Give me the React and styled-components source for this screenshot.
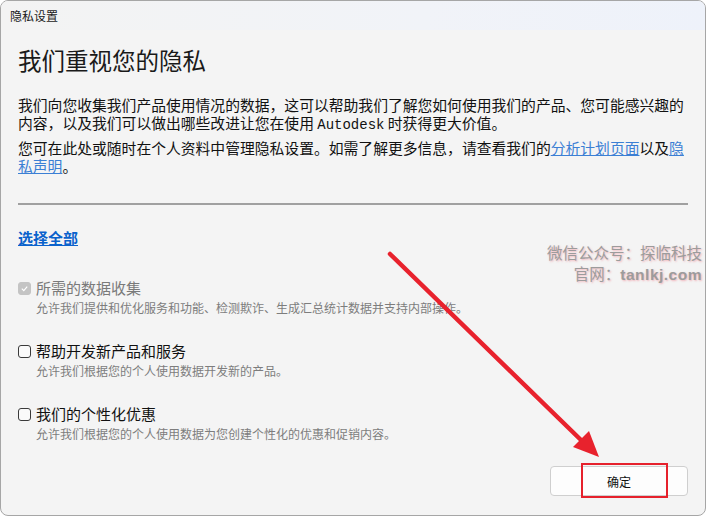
import React from 'react'
import styled, { createGlobalStyle } from 'styled-components'

const GlobalStyle = createGlobalStyle`
    html, body {
        margin: 0;
        padding: 0;
        background: #ffffff;
    }
    body {
        font-family: "Noto Sans CJK SC", "Noto Sans", sans-serif;
    }
`

const Window = styled.div`
    position: relative;
    width: 706px;
    height: 516px;
    box-sizing: border-box;
    border: 1px solid #a6a6a6;
    border-radius: 8px;
    overflow: hidden;
    background: #f4f4f4;
    display: flex;
    flex-direction: column;
`

const TitleBar = styled.div`
    height: 29px;
    display: flex;
    align-items: center;
    padding-left: 9px;
    font-size: 12px;
    color: #1a1a1a;
    background: linear-gradient(90deg, #f3f3f3 0%, #f1f3f8 60%, #eef2fa 100%);
`

const Content = styled.div`
    flex: 1;
    display: flex;
    flex-direction: column;
    padding: 0 17px 0 17px;
`

const Heading = styled.h1`
    margin: 15px 0 0;
    font-size: 23.5px;
    line-height: 30px;
    font-weight: 400;
    color: #1a1a1a;
`

const Paragraph = styled.p`
    margin: ${props => props.first ? '21px' : '5px'} 0 0;
    font-size: 14.8px;
    line-height: 17.5px;
    color: #111;
`

const Mono = styled.span`
    font-family: "Liberation Mono", monospace;
    font-size: 14px;
`

const InlineLink = styled.a`
    color: #3b7fd4;
    text-decoration: underline;
`

const Divider = styled.hr`
    margin: 29px 0 0;
    border: none;
    border-top: 2px solid #a0a0a0;
`

const SelectAll = styled.a`
    margin-top: 22px;
    align-self: flex-start;
    font-size: 15px;
    line-height: 22px;
    font-weight: 700;
    color: #0a62cc;
    text-decoration: underline;
`

const OptionList = styled.div`
    display: flex;
    flex-direction: column;
    gap: 23px;
    margin-top: 29px;
`

const Option = styled.div`
    display: flex;
    flex-direction: column;
`

const OptionRow = styled.label`
    display: flex;
    align-items: center;
    gap: 5px;
    font-size: 15px;
    line-height: 20px;
    color: ${props => props.disabled ? '#7a7a7a' : '#111'};
`

const Box = styled.span`
    width: 13px;
    height: 13px;
    box-sizing: border-box;
    border-radius: 3px;
    display: flex;
    align-items: center;
    justify-content: center;
    border: 1px solid ${props => props.checked ? '#c4c4c4' : '#3a3a3a'};
    background: ${props => props.checked ? '#c4c4c4' : '#fafafa'};
`

const OptionDesc = styled.div`
    padding-left: 18px;
    font-size: 12px;
    line-height: 20px;
    color: #7d7d7d;
`

const Footer = styled.div`
    margin-top: auto;
    display: flex;
    justify-content: flex-end;
    padding-bottom: 19px;
`

const OkButton = styled.button`
    width: 138px;
    height: 30px;
    border: 1px solid #cfcfcf;
    border-radius: 4px;
    background: #fdfdfd;
    font-family: inherit;
    font-size: 12px;
    color: #111;
`

const Highlight = styled.div`
    position: absolute;
    left: 580px;
    top: 462px;
    width: 87px;
    height: 35px;
    box-sizing: border-box;
    border: 2px solid #e6212c;
    pointer-events: none;
`

const Watermark = styled.div`
    position: absolute;
    right: 3px;
    top: 241px;
    display: flex;
    flex-direction: column;
    align-items: flex-end;
    font-size: 15.5px;
    line-height: 21px;
    color: #9c9c9c;
    text-shadow: 1px 1px 2px rgba(240, 150, 160, 0.7);
    pointer-events: none;
`

const WatermarkSite = styled.span`
    font-family: "Liberation Sans", "Noto Sans", sans-serif;
    font-weight: 700;
    letter-spacing: 0.5px;
`

const Overlay = styled.svg`
    position: absolute;
    left: 0;
    top: 0;
    pointer-events: none;
`

function Check () {
    return (
        <svg width="9" height="9" viewBox="0 0 10 10">
            <path d="M2 5.2 L4.2 7.3 L8 3" fill="none" stroke="#ffffff" strokeWidth="1.3" />
        </svg>
    )
}

const options = [
    { label: '所需的数据收集', desc: '允许我们提供和优化服务和功能、检测欺诈、生成汇总统计数据并支持内部操作。', checked: true, disabled: true },
    { label: '帮助开发新产品和服务', desc: '允许我们根据您的个人使用数据开发新的产品。' },
    { label: '我们的个性化优惠', desc: '允许我们根据您的个人使用数据为您创建个性化的优惠和促销内容。' },
]

export default function App () {
    return (
        <>
            <GlobalStyle />
            <Window>
                <TitleBar>隐私设置</TitleBar>
                <Content>
                    <Heading>我们重视您的隐私</Heading>
                    <Paragraph first>
                        我们向您收集我们产品使用情况的数据，这可以帮助我们了解您如何使用我们的产品、您可能感兴趣的内容，以及我们可以做出哪些改进让您在使用 <Mono>Autodesk</Mono> 时获得更大价值。
                    </Paragraph>
                    <Paragraph>
                        您可在此处或随时在个人资料中管理隐私设置。如需了解更多信息，请查看我们的<InlineLink>分析计划页面</InlineLink>以及<InlineLink>隐私声明</InlineLink>。
                    </Paragraph>
                    <Divider />
                    <SelectAll>选择全部</SelectAll>
                    <OptionList>
                        {options.map(opt => (
                            <Option key={opt.label}>
                                <OptionRow disabled={opt.disabled}>
                                    <Box checked={opt.checked}>{opt.checked && <Check />}</Box>
                                    {opt.label}
                                </OptionRow>
                                <OptionDesc>{opt.desc}</OptionDesc>
                            </Option>
                        ))}
                    </OptionList>
                    <Footer>
                        <OkButton>确定</OkButton>
                    </Footer>
                </Content>
                <Watermark>
                    <span>微信公众号：探临科技</span>
                    <span>官网：<WatermarkSite>tanlkj.com</WatermarkSite></span>
                </Watermark>
                <Highlight />
                <Overlay width="706" height="516">
                    <line x1="389" y1="253" x2="581" y2="440" stroke="#e8222d" strokeWidth="4.5" strokeLinecap="round" />
                    <polygon points="598,456 572,446 588,430" fill="#e8222d" />
                </Overlay>
            </Window>
        </>
    )
}
